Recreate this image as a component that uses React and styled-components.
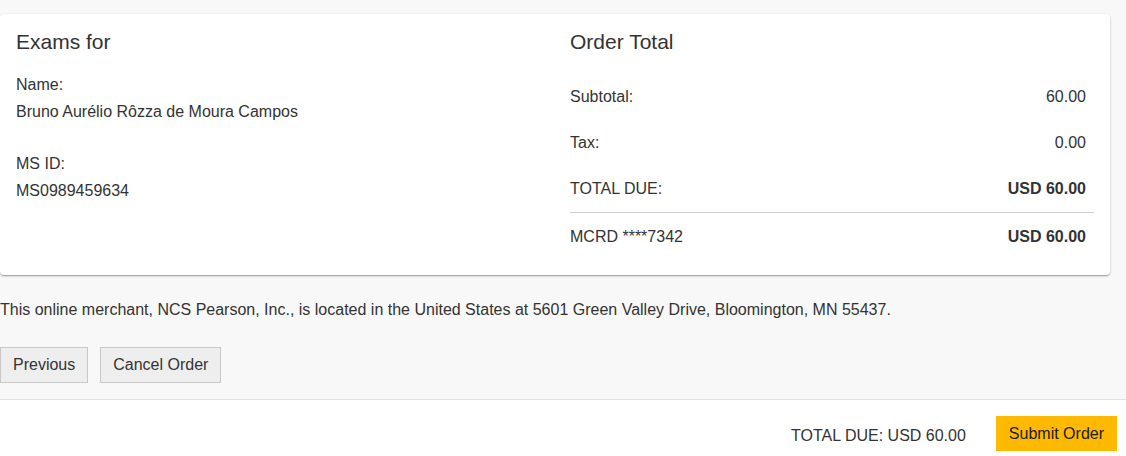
import React from "react";
import styled, { createGlobalStyle } from "styled-components";

const Global = createGlobalStyle`
  html, body { margin: 0; padding: 0; }
  body {
    background: #f8f8f8;
    font-family: "Liberation Sans", Arial, sans-serif;
    font-size: 16px;
    color: #333;
  }
`;

const Page = styled.div`
  display: flex;
  flex-direction: column;
  min-height: 456px;
`;

const Main = styled.main`
  padding: 14px 16px 16px 0;
  display: flex;
  flex-direction: column;
`;

const Card = styled.section`
  background: #fff;
  border-radius: 4px;
  box-shadow: 0 1px 3px rgba(0, 0, 0, 0.2), 0 1px 1px rgba(0, 0, 0, 0.14),
    0 2px 1px -1px rgba(0, 0, 0, 0.12);
  display: grid;
  grid-template-columns: 554fr 556fr;
  padding: 16px 0 15px;
`;

const Column = styled.div`
  padding: 0 16px;
  display: flex;
  flex-direction: column;
`;

const Heading = styled.h2`
  margin: 0;
  font-size: 21px;
  font-weight: 400;
  line-height: 24px;
  color: #333;
`;

const Field = styled.div`
  margin-top: ${(p) => p.$top}px;
  line-height: 27px;
`;

const Rows = styled.div`
  margin-top: 20px;
`;

const Row = styled.div`
  display: flex;
  justify-content: space-between;
  align-items: center;
  line-height: 22px;
  padding: 12px 8px 12px 0;
  border-top: ${(p) => (p.$divided ? "1px solid #d0d0d0" : "none")};
  padding-top: ${(p) => (p.$divided ? 13 : 12)}px;
`;

const Value = styled.span`
  font-weight: ${(p) => (p.$bold ? 700 : 400)};
`;

const Notice = styled.p`
  margin: 24px 0 0;
  line-height: 22px;
`;

const Actions = styled.div`
  display: flex;
  gap: 12px;
  margin-top: 26px;
`;

const GrayButton = styled.button`
  font-family: inherit;
  font-size: 16px;
  color: #333;
  background: #eeeeee;
  border: 1px solid #c8c8c8;
  border-radius: 0;
  height: 36px;
  padding: 0 12px;
  cursor: pointer;
`;

const Footer = styled.footer`
  margin-top: auto;
  background: #fff;
  border-top: 1px solid #e2e2e2;
  display: flex;
  justify-content: flex-end;
  align-items: center;
  gap: 30px;
  padding: 16px 9px 5px 0;
`;

const FooterTotal = styled.span`
  line-height: 22px;
  padding-top: 4px;
`;

const SubmitButton = styled.button`
  font-family: inherit;
  font-size: 16px;
  color: #1a1a1a;
  background: #ffb900;
  border: none;
  border-radius: 0;
  height: 35px;
  padding: 0 13px;
  cursor: pointer;
`;

export default function App() {
  return (
    <Page>
      <Global />
      <Main>
        <Card>
          <Column>
            <Heading>Exams for</Heading>
            <Field $top={17}>
              <div>Name:</div>
              <div>Bruno Aurélio Rôzza de Moura Campos</div>
            </Field>
            <Field $top={25}>
              <div>MS ID:</div>
              <div>MS0989459634</div>
            </Field>
          </Column>
          <Column>
            <Heading>Order Total</Heading>
            <Rows>
              <Row>
                <span>Subtotal:</span>
                <Value>60.00</Value>
              </Row>
              <Row>
                <span>Tax:</span>
                <Value>0.00</Value>
              </Row>
              <Row>
                <span>TOTAL DUE:</span>
                <Value $bold>USD 60.00</Value>
              </Row>
              <Row $divided>
                <span>MCRD ****7342</span>
                <Value $bold>USD 60.00</Value>
              </Row>
            </Rows>
          </Column>
        </Card>
        <Notice>
          This online merchant, NCS Pearson, Inc., is located in the United States at 5601 Green
          Valley Drive, Bloomington, MN 55437.
        </Notice>
        <Actions>
          <GrayButton>Previous</GrayButton>
          <GrayButton>Cancel Order</GrayButton>
        </Actions>
      </Main>
      <Footer>
        <FooterTotal>TOTAL DUE: USD 60.00</FooterTotal>
        <SubmitButton>Submit Order</SubmitButton>
      </Footer>
    </Page>
  );
}
